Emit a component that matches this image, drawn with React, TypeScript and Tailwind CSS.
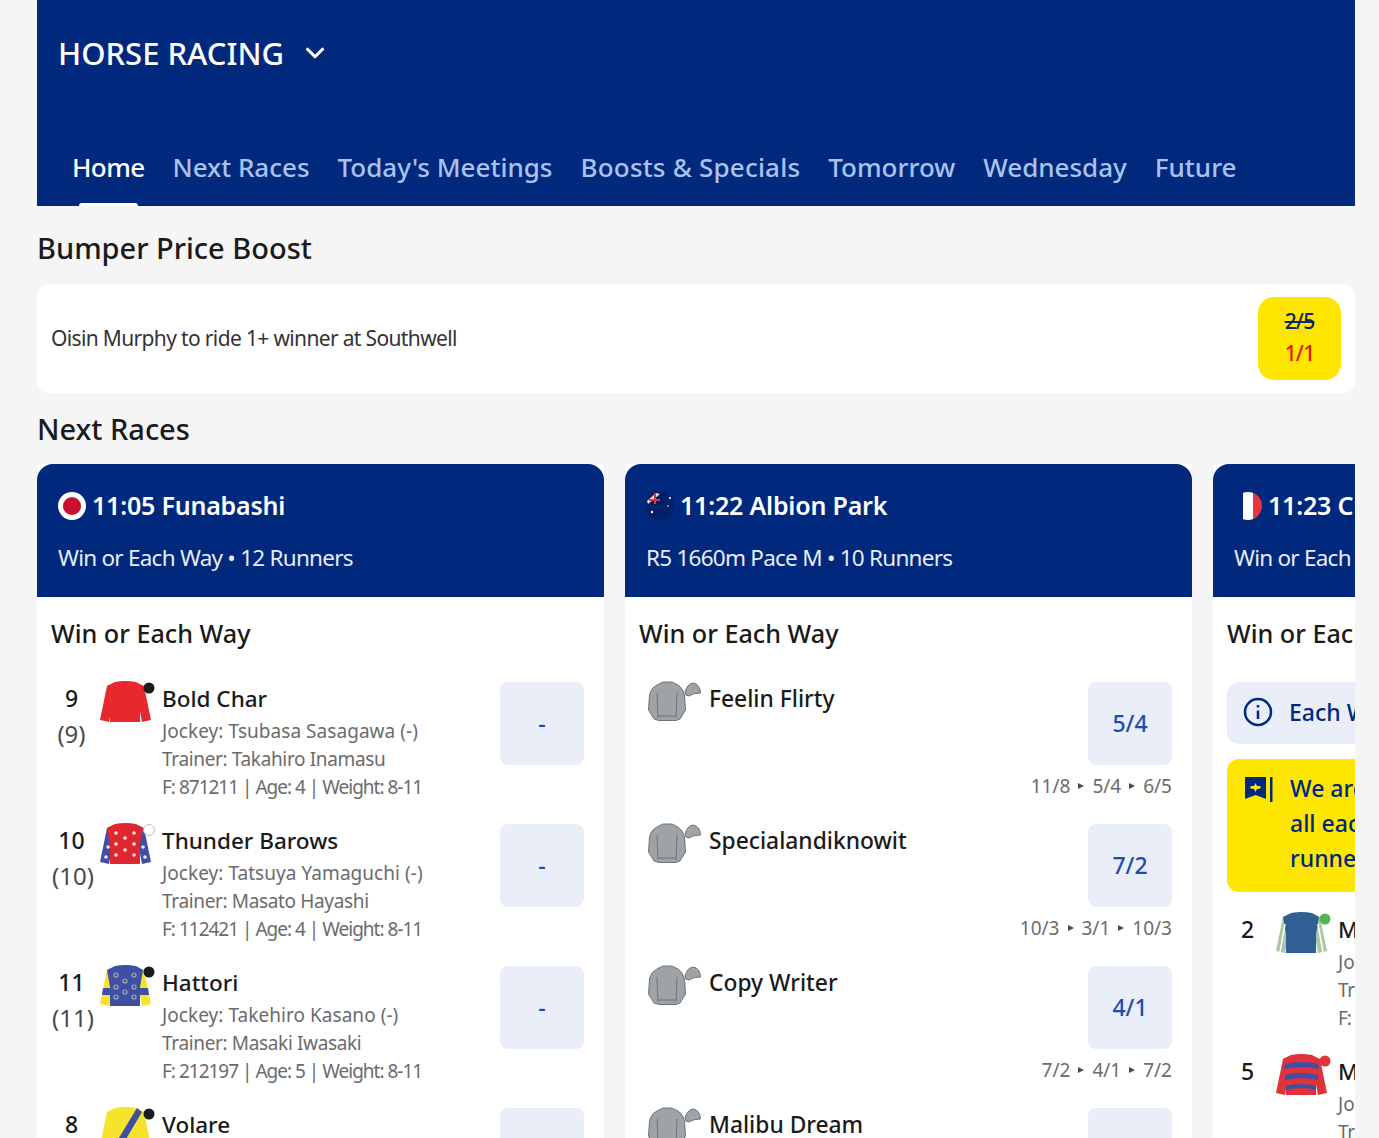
import { ChevronDown } from "lucide-react";
import type { ReactNode } from "react";

const FONT = "font-['Noto_Sans',sans-serif]";

function Jacket({ body, sleeve, cap, capRing, children }: { body: string; sleeve: string; cap: string; capRing?: boolean; children?: ReactNode }) {
	return (
		<svg width="56" height="44" viewBox="0 0 56 44" className="-mt-px shrink-0">
			<path d="M14 2 L7 5 L0 39 L9 41 L13 20 Z" fill={sleeve} />
			<path d="M37 2 L44 5 L51 39 L42 41 L38 20 Z" fill={sleeve} />
			<path d="M15 1 Q25 -1 36 1 L43 5 L40 22 L40 41 L10 41 L10 22 L7 5 Z" fill={body} />
			{children}
			<circle cx="49" cy="7" r="5.500" fill={cap} stroke={capRing ? "#bbbbbb" : "none"} strokeWidth="1" />
		</svg>
	);
}

function GreySilk() {
	return (
		<svg width="54" height="42" viewBox="0 0 54 42" className="-mt-px shrink-0">
			<path d="M15 1 H24 L30 4 Q35 7 36.500 14 L37.500 29 L32 38 L28 39.500 H11 L6 38 L0.500 29 L1.500 14 Q3 7 9 4 Z" fill="#9ea3a8" stroke="#6f7479" strokeWidth="1" />
			<path d="M9 12 L10 37 M29 12 L28 37 M10 35 H28" stroke="#6f7479" strokeWidth="1" fill="none" />
			<path d="M37 11 Q39 3 45 2 Q52 3 52.500 12 Q45 12 41 15 Q37 15 37 11 Z" fill="#9ea3a8" stroke="#6f7479" strokeWidth="1" />
		</svg>
	);
}

function Dots({ fill, points }: { fill: string; points: number[][] }) {
	return (
		<>
			{points.map(([x, y]) => (
				<circle key={`${x}-${y}`} cx={x} cy={y} r="1.800" fill={fill} />
			))}
		</>
	);
}

function Rings({ points }: { points: number[][] }) {
	return (
		<>
			{points.map(([x, y]) => (
				<circle key={`${x}-${y}`} cx={x} cy={y} r="2" fill="#3f4fa3" stroke="#a3abb0" strokeWidth="1.200" />
			))}
		</>
	);
}

const silks: Record<string, ReactNode> = {
	bold: <Jacket body="#e8282f" sleeve="#e8282f" cap="#1b1b1b" />,
	thunder: (
		<Jacket body="#e0262e" sleeve="#3f4fa3" cap="#ffffff" capRing>
			<Dots fill="#f4e9e9" points={[[16, 10], [34, 10], [25, 15], [16, 21], [34, 21], [25, 27], [16, 32], [34, 32], [6, 34], [8, 24], [45, 34], [43, 24]]} />
		</Jacket>
	),
	hattori: (
		<Jacket body="#3f4fa3" sleeve="#f6e32b" cap="#1b1b1b">
			<path d="M3 23 H48 L49 30 H2 Z" fill="#3f4fa3" />
			<Rings points={[[16, 10], [34, 10], [25, 16], [16, 22], [34, 22], [25, 27], [16, 32], [34, 32]]} />
		</Jacket>
	),
	volare: (
		<Jacket body="#f6e32b" sleeve="#f6e32b" cap="#1b1b1b">
			<path d="M37 1 L42 5 L19 44 L11 44 Z" fill="#3f4fa3" />
		</Jacket>
	),
	blue: (
		<Jacket body="#2f5f93" sleeve="#a9c9a4" cap="#55b552">
			<path d="M9 12 L4 40 M42 12 L47 40" stroke="#ffffff" strokeWidth="1.500" />
		</Jacket>
	),
	hoops: (
		<Jacket body="#e0323a" sleeve="#e0323a" cap="#e0323a">
			<path d="M9 10 Q25 6 42 10 L43 15 Q25 11 8 15 Z M9 21 Q25 17 42 21 L42 26 Q25 22 9 26 Z M10 32 Q25 28 40 32 L40 36 Q25 32 10 36 Z" fill="#3f4fa3" />
		</Jacket>
	),
};

function Odds({ value }: { value: string }) {
	return (
		<div className="flex h-[83px] w-[84px] shrink-0 items-center justify-center rounded-lg bg-[#e9eef9] text-[23px] font-medium text-[#1d4db0]">
			{value}
		</div>
	);
}

function Runner({ num, draw, silk, name, jockey, trainer, form }: { num: string; draw: string; silk: string; name: string; jockey: string; trainer: string; form: string }) {
	return (
		<div className="flex h-[142px] pl-[15px] pr-[20px]">
			<div className="w-[39px] shrink-0 text-center">
				<div className="text-[23px] font-medium leading-[33px] text-[#1a1a1a]">{num}</div>
				<div className="whitespace-nowrap text-[24px] leading-[38px] text-[#4a4a4a]">{draw}</div>
			</div>
			<div className="ml-[9px] w-[62px] shrink-0">{silks[silk]}</div>
			<div className="min-w-0 flex-1">
				<div className="text-[22.5px] font-medium leading-[33px] text-[#1a1a1a]">{name}</div>
				<div className="mt-[2px] whitespace-nowrap text-[19px] leading-[28px] text-[#6b6b6b]">
					<div className="tracking-[0.05px]">{jockey}</div>
					<div className="tracking-[-0.35px]">{trainer}</div>
					<div className="tracking-[-1px]">{form}</div>
				</div>
			</div>
			<Odds value="-" />
		</div>
	);
}

function GreyRunner({ name, odds, history }: { name: string; odds?: string; history?: string[] }) {
	return (
		<div className="flex h-[142px] pl-[23px] pr-[20px]">
			<div className="w-[61px] shrink-0">
				<GreySilk />
			</div>
			<div className="min-w-0 flex-1 text-[22.8px] font-medium leading-[33px] text-[#1a1a1a]">{name}</div>
			<div className="flex flex-col items-end">
				{odds ? <Odds value={odds} /> : <div className="h-[83px] w-[84px] rounded-lg bg-[#e9eef9]" />}
				{history && (
					<div className="mt-[6px] flex items-center gap-[8px] text-[19px] leading-[30px] text-[#6b6b6b]">
						{history.map((h, i) => (
							<span key={i} className="flex items-center gap-[8px]">
								{i > 0 && <span className="h-0 w-0 border-y-[3.5px] border-l-[6px] border-y-transparent border-l-[#4a4a4a]" />}
								{h}
							</span>
						))}
					</div>
				)}
			</div>
		</div>
	);
}

function CardHead({ flag, title, sub }: { flag: ReactNode; title: string; sub: string }) {
	return (
		<div className="h-[133px] rounded-t-2xl bg-[#00287d] px-[21px] pt-[25px] text-white">
			<div className="flex h-[34px] items-center gap-[6px] whitespace-nowrap text-[25px] font-semibold tracking-[-0.2px]">
				{flag}
				{title}
			</div>
			<div className="mt-[18px] whitespace-nowrap text-[22.5px] leading-[34px] tracking-[-0.75px] text-[#e6ecf8]">{sub}</div>
		</div>
	);
}

function Japan() {
	return (
		<svg width="28" height="28" viewBox="0 0 28 28" className="shrink-0">
			<circle cx="14" cy="14" r="14" fill="#ffffff" />
			<circle cx="14" cy="14" r="9" fill="#c8102e" />
		</svg>
	);
}

function Australia() {
	return (
		<svg width="28" height="28" viewBox="0 0 28 28" className="shrink-0">
			<circle cx="14" cy="14" r="14" fill="#002068" />
			<path d="M2 12 L14 2 L10 1 L1 9 Z" fill="#f2dede" />
			<path d="M3 8 H14 M9 1 V12" stroke="#d9364a" strokeWidth="2" />
			<circle cx="24" cy="6" r="1" fill="#ffffff" />
			<circle cx="6" cy="20" r="1.200" fill="#ffffff" />
			<circle cx="22" cy="14" r="0.800" fill="#ffffff" />
		</svg>
	);
}

function France() {
	return (
		<svg width="28" height="28" viewBox="0 0 28 28" className="shrink-0">
			<clipPath id="fr">
				<circle cx="14" cy="14" r="14" />
			</clipPath>
			<g clipPath="url(#fr)">
				<rect x="0" width="9" height="28" fill="#00287d" />
				<rect x="9" width="10" height="28" fill="#ffffff" />
				<rect x="19" width="9" height="28" fill="#e8343c" />
			</g>
		</svg>
	);
}

function SectionTitle({ children }: { children: ReactNode }) {
	return <h2 className="text-[29px] font-medium leading-[36px] text-[#1a1a1a]">{children}</h2>;
}

function MarketTitle() {
	return <div className="whitespace-nowrap pl-[14px] pt-[18px] text-[25.2px] font-medium leading-[36px] text-[#1a1a1a]">Win or Each Way</div>;
}

export default function App() {
	const tabs = ["Next Races", "Today's Meetings"];
	const laterTabs = ["Tomorrow", "Wednesday", "Future"];

	return (
		<div className={`${FONT} h-[1138px] overflow-hidden bg-[#f5f5f5]`}>
			<div className="ml-[37px] w-[1318px]">
				{/* Header */}
				<header className="h-[206px] bg-[#00287d] text-white">
					<div className="flex h-[106px] items-center pl-[21px]">
						<span className="text-[31px] font-medium">HORSE RACING</span>
						<ChevronDown size={30} strokeWidth={2.5} className="ml-[16px]" />
					</div>
					<nav className="flex h-[100px] gap-[28px] pl-[35px] pt-[43px] text-[26px] font-medium leading-[36px] text-[#a9c2ee]">
						<div className="relative h-[57px] tracking-[-0.6px] text-white">
							Home
							<div className="absolute bottom-0 left-[7px] h-[3px] w-[59px] rounded-t bg-white" />
						</div>
						{tabs.map((tab) => (
							<div key={tab} className="whitespace-nowrap">{tab}</div>
						))}
						<div className="whitespace-nowrap tracking-[0.2px]">{"Boosts & Specials"}</div>
						{laterTabs.map((tab) => (
							<div key={tab} className="whitespace-nowrap">{tab}</div>
						))}
					</nav>
				</header>

				<div className="pt-[24px]">
					<SectionTitle>Bumper Price Boost</SectionTitle>
				</div>
				<div className="mt-[18px] flex h-[109px] items-center justify-between rounded-xl bg-white px-[14px]">
					<span className="text-[21px] tracking-[-0.65px] text-[#333333]">Oisin Murphy to ride 1+ winner at Southwell</span>
					<div className="flex h-[83px] w-[83px] flex-col items-center justify-center gap-[4px] rounded-2xl bg-[#ffe600] pb-[4px] text-[21px] font-medium leading-[28px] tracking-[-0.8px]">
						<span className="text-[#0b2a5b] line-through">2/5</span>
						<span className="text-[#e3170a]">1/1</span>
					</div>
				</div>

				<div className="mt-[18px]">
					<SectionTitle>Next Races</SectionTitle>
				</div>

				{/* Race cards */}
				<div className="mt-[17px] flex gap-[21px] overflow-hidden">
					<div className="w-[567px] shrink-0 bg-white">
						<CardHead flag={<Japan />} title="11:05 Funabashi" sub="Win or Each Way • 12 Runners" />
						<MarketTitle />
						<div className="mt-[31px]">
							<Runner num="9" draw="(9)" silk="bold" name="Bold Char" jockey="Jockey: Tsubasa Sasagawa (-)" trainer="Trainer: Takahiro Inamasu" form="F: 871211 | Age: 4 | Weight: 8-11" />
							<Runner num="10" draw="(10)" silk="thunder" name="Thunder Barows" jockey="Jockey: Tatsuya Yamaguchi (-)" trainer="Trainer: Masato Hayashi" form="F: 112421 | Age: 4 | Weight: 8-11" />
							<Runner num="11" draw="(11)" silk="hattori" name="Hattori" jockey="Jockey: Takehiro Kasano (-)" trainer="Trainer: Masaki Iwasaki" form="F: 212197 | Age: 5 | Weight: 8-11" />
							<Runner num="8" draw="" silk="volare" name="Volare" jockey="" trainer="" form="" />
						</div>
					</div>

					<div className="w-[567px] shrink-0 bg-white">
						<CardHead flag={<Australia />} title="11:22 Albion Park" sub="R5 1660m Pace M • 10 Runners" />
						<MarketTitle />
						<div className="mt-[31px]">
							<GreyRunner name="Feelin Flirty" odds="5/4" history={["11/8", "5/4", "6/5"]} />
							<GreyRunner name="Specialandiknowit" odds="7/2" history={["10/3", "3/1", "10/3"]} />
							<GreyRunner name="Copy Writer" odds="4/1" history={["7/2", "4/1", "7/2"]} />
							<GreyRunner name="Malibu Dream" />
						</div>
					</div>

					<div className="w-[567px] shrink-0 bg-white">
						<CardHead flag={<France />} title="11:23 Cros" sub="Win or Each Way" />
						<MarketTitle />
						<div className="mx-[14px] mt-[31px] flex h-[62px] items-center gap-[16px] rounded-xl bg-[#e9eef9] pb-[2px] pl-[16px] text-[23px] font-medium text-[#00287d]">
							<svg width="30" height="30" viewBox="0 0 30 30" fill="none" stroke="#00287d" strokeWidth="2.500">
								<circle cx="15" cy="15" r="13" />
								<path d="M15 13.500 V22 M15 8 V10.500" />
							</svg>
							Each Way
						</div>
						<div className="mx-[14px] mt-[15px] flex h-[133px] gap-[16px] rounded-xl bg-[#ffe600] pl-[17px] pt-[12px] text-[23px] font-medium leading-[35px] text-[#00287d]">
							<svg width="30" height="30" viewBox="0 0 30 30" className="mt-[4px]">
								<path d="M1 2 H22 V24 L11.500 20 L1 24 Z" fill="#00287d" />
								<path d="M11.500 8 L13 11 H16.500 V13.500 L13 14 L11.500 17 L10 14 L6.500 13.500 V11 L10 11 Z" fill="#ffe600" />
								<rect x="26" y="2" width="2.500" height="25" fill="#00287d" />
							</svg>
							<div className="whitespace-nowrap">
								<div>We are paying</div>
								<div>all each way</div>
								<div>runners</div>
							</div>
						</div>
						<div className="mt-[21px]">
							<Runner num="2" draw="" silk="blue" name="Mister" jockey="Jockey: A" trainer="Trainer: B" form="F: 1" />
							<Runner num="5" draw="" silk="hoops" name="Mister" jockey="Jockey: A" trainer="Trainer: B" form="F: 1" />
						</div>
					</div>
				</div>
			</div>
		</div>
	);
}
